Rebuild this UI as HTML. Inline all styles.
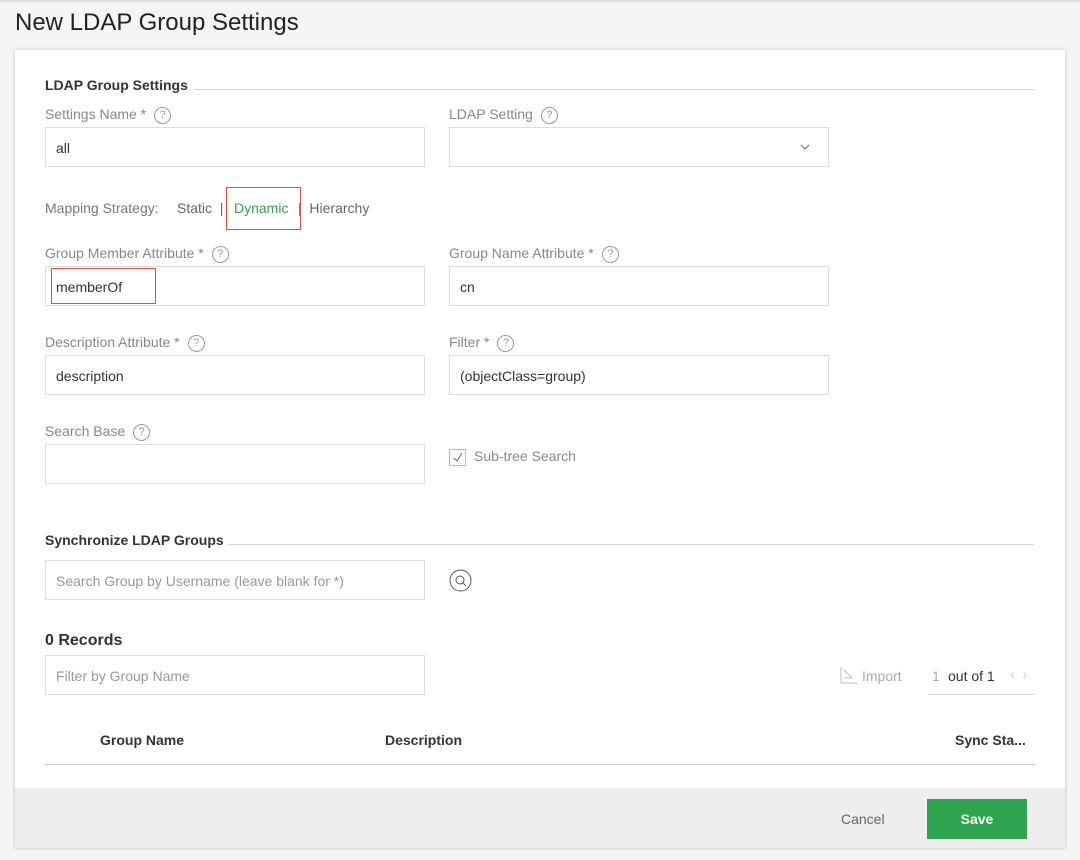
<!DOCTYPE html>
<html><head><style>
*{box-sizing:border-box;margin:0;padding:0}
body{width:1080px;height:860px;background:#f5f5f5;font-family:"Liberation Sans",sans-serif;position:relative;overflow:hidden;color:#333}
.a{position:absolute}
.topline{left:0;top:0;width:1080px;height:2px;background:#ddd}
h1{position:absolute;left:15px;top:9px;font-size:24px;font-weight:normal;color:#222}
.card{left:15px;top:50px;width:1050px;height:798px;background:#fff;box-shadow:0 0 4px rgba(0,0,0,.2)}
.foot{left:15px;top:788px;width:1050px;height:60px;background:#eee}
.sec{font-size:14px;font-weight:bold;color:#333}
.hr{height:1px;background:#d6d6d6}
.lbl{font-size:14px;color:#888}
.q{display:inline-block;width:17px;height:17px;border:1.5px solid #999;border-radius:50%;font-size:11px;text-align:center;line-height:14px;color:#999;margin-left:8px;vertical-align:1px}
.inp{width:380px;height:40px;border:1px solid #ddd;font-size:14px;color:#333;padding:12px 10px}
.ph{color:#999}
.red{border:1px solid #e74c3c}
.th{font-size:14px;font-weight:bold;color:#333}
</style></head><body>
<div class="a topline"></div>
<h1>New LDAP Group Settings</h1>
<div class="a card"></div>
<div class="a foot"></div>

<div class="a sec" style="left:45px;top:77px">LDAP Group Settings</div>
<div class="a hr" style="left:194px;top:89px;width:841px"></div>

<div class="a lbl" style="left:45px;top:106px">Settings Name *<span class="q">?</span></div>
<div class="a inp" style="left:45px;top:127px">all</div>
<div class="a lbl" style="left:449px;top:106px">LDAP Setting<span class="q">?</span></div>
<div class="a inp" style="left:449px;top:127px"></div>
<svg class="a" style="left:800px;top:144px" width="10" height="7"><path d="M1 1l4 4 4-4" stroke="#666" fill="none"/></svg>

<div class="a lbl" style="left:45px;top:200px;color:#777">Mapping Strategy:</div>
<div class="a" style="left:177px;top:200px;font-size:14px;color:#666">Static &nbsp;|</div>
<div class="a red" style="left:226px;top:187px;width:75px;height:43px"></div>
<div class="a" style="left:234px;top:200px;font-size:14px;color:#3a9c4a">Dynamic</div>
<div class="a" style="left:298px;top:200px;font-size:14px;color:#666">|&nbsp;&nbsp;Hierarchy</div>

<div class="a lbl" style="left:45px;top:245px">Group Member Attribute *<span class="q">?</span></div>
<div class="a inp" style="left:45px;top:266px">memberOf</div>
<div class="a red" style="left:51px;top:268px;width:105px;height:36px"></div>
<div class="a lbl" style="left:449px;top:245px">Group Name Attribute *<span class="q">?</span></div>
<div class="a inp" style="left:449px;top:266px">cn</div>

<div class="a lbl" style="left:45px;top:334px">Description Attribute *<span class="q">?</span></div>
<div class="a inp" style="left:45px;top:355px">description</div>
<div class="a lbl" style="left:449px;top:334px">Filter *<span class="q">?</span></div>
<div class="a inp" style="left:449px;top:355px">(objectClass=group)</div>

<div class="a lbl" style="left:45px;top:423px">Search Base<span class="q">?</span></div>
<div class="a inp" style="left:45px;top:444px"></div>
<div class="a" style="left:449px;top:449px;width:17px;height:17px;border:1px solid #bbb"></div>
<svg class="a" style="left:451px;top:451px" width="13" height="13"><path d="M3 7l3 3 5-8" stroke="#666" fill="none"/></svg>
<div class="a lbl" style="left:474px;top:448px">Sub-tree Search</div>

<div class="a sec" style="left:45px;top:532px">Synchronize LDAP Groups</div>
<div class="a hr" style="left:228px;top:544px;width:807px"></div>
<div class="a inp ph" style="left:45px;top:560px">Search Group by Username (leave blank for *)</div>
<svg class="a" style="left:449px;top:569px" width="24" height="24"><circle cx="11.5" cy="11.5" r="10.5" stroke="#555" fill="none"/><circle cx="11" cy="11" r="4" stroke="#555" fill="none"/><path d="M14 14l3 3" stroke="#555"/></svg>

<div class="a" style="left:45px;top:632px;font-size:16px;font-weight:bold;color:#333">0 Records</div>
<div class="a inp ph" style="left:45px;top:655px">Filter by Group Name</div>
<svg class="a" style="left:840px;top:666px" width="18" height="18"><path d="M1 1v16h16" stroke="#bbb" fill="none"/><path d="M4 4l8 8M4 12h8" stroke="#bbb" fill="none"/></svg>
<div class="a" style="left:862px;top:668px;font-size:14px;color:#aaa">Import</div>
<div class="a" style="left:932px;top:668px;font-size:14px;color:#aaa">1</div>
<div class="a" style="left:948px;top:668px;font-size:14px;color:#333">out of 1</div>
<div class="a" style="left:1010px;top:666px;font-size:14px;color:#ccc">‹ &nbsp;›</div>
<div class="a hr" style="left:928px;top:694px;width:107px"></div>

<div class="a th" style="left:100px;top:732px">Group Name</div>
<div class="a th" style="left:385px;top:732px">Description</div>
<div class="a th" style="left:955px;top:732px">Sync Sta...</div>
<div class="a hr" style="left:45px;top:764px;width:990px;background:#ccc"></div>

<div class="a" style="left:841px;top:811px;font-size:14px;color:#666">Cancel</div>
<div class="a" style="left:927px;top:799px;width:100px;height:40px;background:#2ea44f;color:#fff;font-size:14px;font-weight:bold;text-align:center;line-height:40px">Save</div>
</body></html>
